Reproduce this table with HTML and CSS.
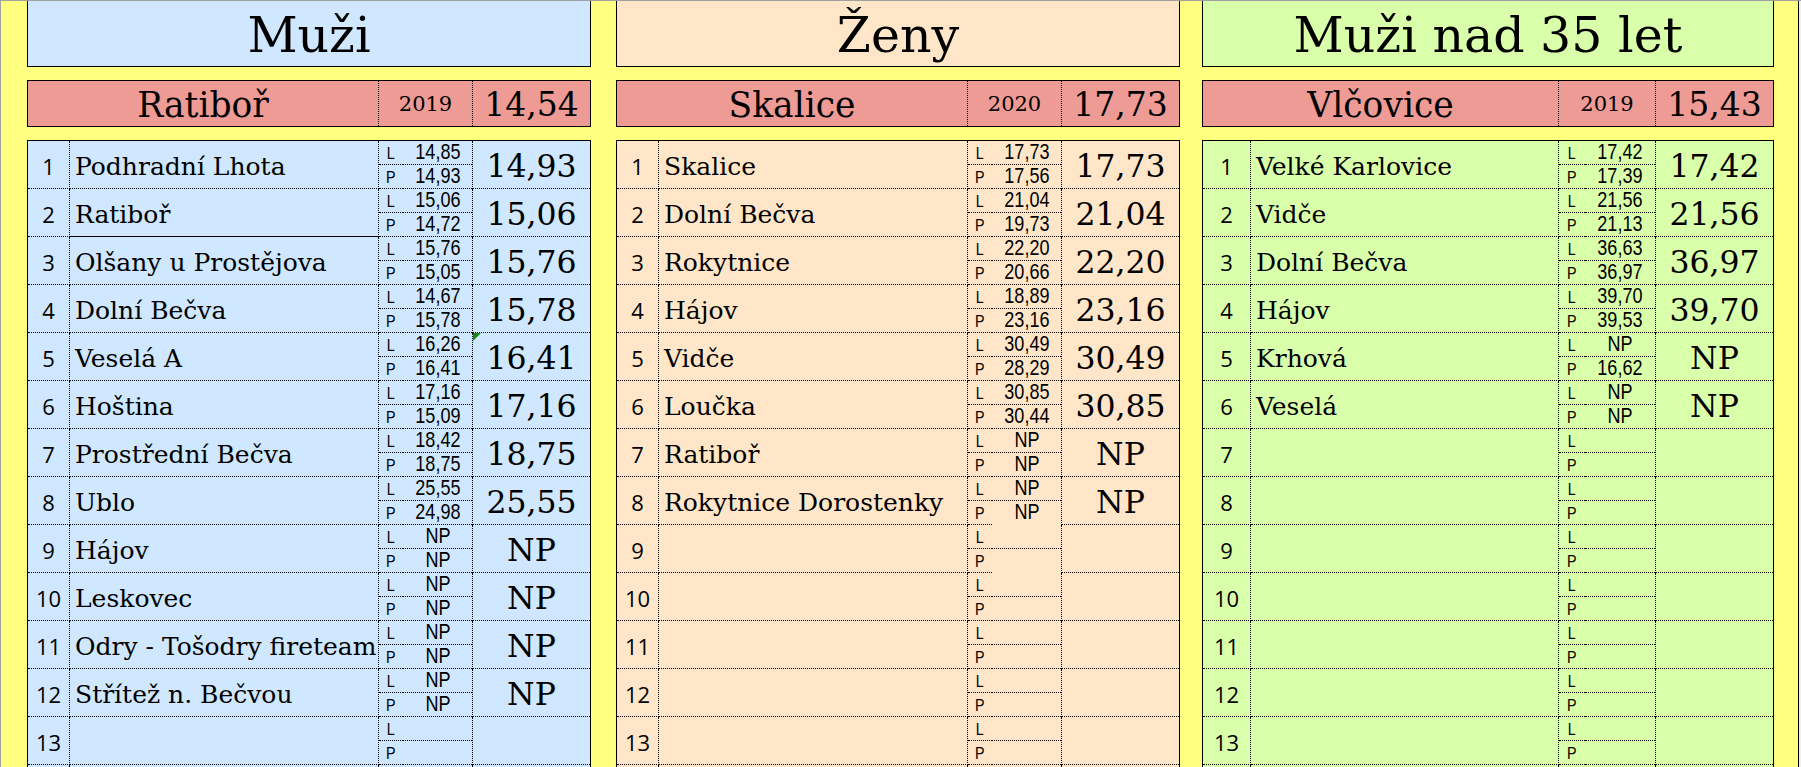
FILE: index.html
```html
<!DOCTYPE html>
<html lang="cs">
<head>
<meta charset="utf-8">
<title>Výsledky</title>
<link rel="stylesheet" href="styles.css">
</head>
<body>
<div class="sheet">
  <section class="panel men">
    <div class="title">Muži</div>
    <div class="record"><div class="rec-name">Ratiboř</div><div class="rec-year">2019</div><div class="rec-time">14,54</div></div>
    <div class="table">
      <div class="row"><div class="num">1</div><div class="name">Podhradní Lhota</div><div class="lp"><span class="ltr"><i>L</i></span><span class="val"><i>14,85</i></span><span class="ltr"><i>P</i></span><span class="val"><i>14,93</i></span></div><div class="res">14,93</div></div>
      <div class="row"><div class="num">2</div><div class="name solid-b">Ratiboř</div><div class="lp"><span class="ltr"><i>L</i></span><span class="val"><i>15,06</i></span><span class="ltr"><i>P</i></span><span class="val"><i>14,72</i></span></div><div class="res">15,06</div></div>
      <div class="row"><div class="num">3</div><div class="name">Olšany u Prostějova</div><div class="lp"><span class="ltr"><i>L</i></span><span class="val"><i>15,76</i></span><span class="ltr"><i>P</i></span><span class="val"><i>15,05</i></span></div><div class="res">15,76</div></div>
      <div class="row"><div class="num">4</div><div class="name">Dolní Bečva</div><div class="lp"><span class="ltr"><i>L</i></span><span class="val"><i>14,67</i></span><span class="ltr"><i>P</i></span><span class="val"><i>15,78</i></span></div><div class="res">15,78</div></div>
      <div class="row"><div class="num">5</div><div class="name">Veselá A</div><div class="lp"><span class="ltr"><i>L</i></span><span class="val"><i>16,26</i></span><span class="ltr"><i>P</i></span><span class="val"><i>16,41</i></span></div><div class="res flagged">16,41</div></div>
      <div class="row"><div class="num">6</div><div class="name">Hoština</div><div class="lp"><span class="ltr"><i>L</i></span><span class="val"><i>17,16</i></span><span class="ltr"><i>P</i></span><span class="val"><i>15,09</i></span></div><div class="res">17,16</div></div>
      <div class="row"><div class="num">7</div><div class="name">Prostřední Bečva</div><div class="lp"><span class="ltr"><i>L</i></span><span class="val"><i>18,42</i></span><span class="ltr"><i>P</i></span><span class="val"><i>18,75</i></span></div><div class="res">18,75</div></div>
      <div class="row"><div class="num">8</div><div class="name">Ublo</div><div class="lp"><span class="ltr"><i>L</i></span><span class="val"><i>25,55</i></span><span class="ltr"><i>P</i></span><span class="val"><i>24,98</i></span></div><div class="res">25,55</div></div>
      <div class="row"><div class="num">9</div><div class="name">Hájov</div><div class="lp"><span class="ltr"><i>L</i></span><span class="val"><i>NP</i></span><span class="ltr"><i>P</i></span><span class="val"><i>NP</i></span></div><div class="res">NP</div></div>
      <div class="row"><div class="num">10</div><div class="name">Leskovec</div><div class="lp"><span class="ltr"><i>L</i></span><span class="val"><i>NP</i></span><span class="ltr"><i>P</i></span><span class="val"><i>NP</i></span></div><div class="res">NP</div></div>
      <div class="row"><div class="num">11</div><div class="name">Odry - Tošodry fireteam</div><div class="lp"><span class="ltr"><i>L</i></span><span class="val"><i>NP</i></span><span class="ltr"><i>P</i></span><span class="val"><i>NP</i></span></div><div class="res">NP</div></div>
      <div class="row"><div class="num">12</div><div class="name">Střítež n. Bečvou</div><div class="lp"><span class="ltr"><i>L</i></span><span class="val"><i>NP</i></span><span class="ltr"><i>P</i></span><span class="val"><i>NP</i></span></div><div class="res">NP</div></div>
      <div class="row"><div class="num">13</div><div class="name"></div><div class="lp"><span class="ltr"><i>L</i></span><span class="val"></span><span class="ltr"><i>P</i></span><span class="val"></span></div><div class="res"></div></div>
      <div class="row"><div class="num"></div><div class="name"></div><div class="lp"><span class="ltr"></span><span class="val"></span><span class="ltr"></span><span class="val"></span></div><div class="res"></div></div>
    </div>
  </section>

  <section class="panel women">
    <div class="title">Ženy</div>
    <div class="record"><div class="rec-name">Skalice</div><div class="rec-year">2020</div><div class="rec-time">17,73</div></div>
    <div class="table">
      <div class="row"><div class="num">1</div><div class="name">Skalice</div><div class="lp"><span class="ltr"><i>L</i></span><span class="val"><i>17,73</i></span><span class="ltr"><i>P</i></span><span class="val"><i>17,56</i></span></div><div class="res">17,73</div></div>
      <div class="row"><div class="num">2</div><div class="name">Dolní Bečva</div><div class="lp"><span class="ltr"><i>L</i></span><span class="val"><i>21,04</i></span><span class="ltr"><i>P</i></span><span class="val"><i>19,73</i></span></div><div class="res">21,04</div></div>
      <div class="row"><div class="num">3</div><div class="name">Rokytnice</div><div class="lp"><span class="ltr"><i>L</i></span><span class="val"><i>22,20</i></span><span class="ltr"><i>P</i></span><span class="val"><i>20,66</i></span></div><div class="res">22,20</div></div>
      <div class="row"><div class="num">4</div><div class="name">Hájov</div><div class="lp"><span class="ltr"><i>L</i></span><span class="val"><i>18,89</i></span><span class="ltr"><i>P</i></span><span class="val"><i>23,16</i></span></div><div class="res">23,16</div></div>
      <div class="row"><div class="num">5</div><div class="name">Vidče</div><div class="lp"><span class="ltr"><i>L</i></span><span class="val"><i>30,49</i></span><span class="ltr"><i>P</i></span><span class="val"><i>28,29</i></span></div><div class="res">30,49</div></div>
      <div class="row"><div class="num">6</div><div class="name">Loučka</div><div class="lp"><span class="ltr"><i>L</i></span><span class="val"><i>30,85</i></span><span class="ltr"><i>P</i></span><span class="val"><i>30,44</i></span></div><div class="res">30,85</div></div>
      <div class="row"><div class="num">7</div><div class="name">Ratiboř</div><div class="lp"><span class="ltr"><i>L</i></span><span class="val"><i>NP</i></span><span class="ltr"><i>P</i></span><span class="val"><i>NP</i></span></div><div class="res">NP</div></div>
      <div class="row"><div class="num">8</div><div class="name">Rokytnice Dorostenky</div><div class="lp"><span class="ltr"><i>L</i></span><span class="val"><i>NP</i></span><span class="ltr"><i>P</i></span><span class="val open-b"><i>NP</i></span></div><div class="res">NP</div></div>
      <div class="row"><div class="num">9</div><div class="name"></div><div class="lp"><span class="ltr"><i>L</i></span><span class="val"></span><span class="ltr"><i>P</i></span><span class="val open-b"></span></div><div class="res"></div></div>
      <div class="row"><div class="num">10</div><div class="name"></div><div class="lp"><span class="ltr"><i>L</i></span><span class="val"></span><span class="ltr"><i>P</i></span><span class="val"></span></div><div class="res"></div></div>
      <div class="row"><div class="num">11</div><div class="name"></div><div class="lp"><span class="ltr"><i>L</i></span><span class="val"></span><span class="ltr"><i>P</i></span><span class="val"></span></div><div class="res"></div></div>
      <div class="row"><div class="num">12</div><div class="name"></div><div class="lp"><span class="ltr"><i>L</i></span><span class="val"></span><span class="ltr"><i>P</i></span><span class="val"></span></div><div class="res"></div></div>
      <div class="row"><div class="num">13</div><div class="name"></div><div class="lp"><span class="ltr"><i>L</i></span><span class="val"></span><span class="ltr"><i>P</i></span><span class="val"></span></div><div class="res"></div></div>
      <div class="row"><div class="num"></div><div class="name"></div><div class="lp"><span class="ltr"></span><span class="val"></span><span class="ltr"></span><span class="val"></span></div><div class="res"></div></div>
    </div>
  </section>

  <section class="panel senior">
    <div class="title">Muži nad 35 let</div>
    <div class="record"><div class="rec-name">Vlčovice</div><div class="rec-year">2019</div><div class="rec-time">15,43</div></div>
    <div class="table">
      <div class="row"><div class="num">1</div><div class="name">Velké Karlovice</div><div class="lp"><span class="ltr"><i>L</i></span><span class="val"><i>17,42</i></span><span class="ltr"><i>P</i></span><span class="val"><i>17,39</i></span></div><div class="res">17,42</div></div>
      <div class="row"><div class="num">2</div><div class="name">Vidče</div><div class="lp"><span class="ltr"><i>L</i></span><span class="val"><i>21,56</i></span><span class="ltr"><i>P</i></span><span class="val"><i>21,13</i></span></div><div class="res">21,56</div></div>
      <div class="row"><div class="num">3</div><div class="name">Dolní Bečva</div><div class="lp"><span class="ltr"><i>L</i></span><span class="val"><i>36,63</i></span><span class="ltr"><i>P</i></span><span class="val"><i>36,97</i></span></div><div class="res">36,97</div></div>
      <div class="row"><div class="num">4</div><div class="name">Hájov</div><div class="lp"><span class="ltr"><i>L</i></span><span class="val"><i>39,70</i></span><span class="ltr"><i>P</i></span><span class="val"><i>39,53</i></span></div><div class="res">39,70</div></div>
      <div class="row"><div class="num">5</div><div class="name">Krhová</div><div class="lp"><span class="ltr"><i>L</i></span><span class="val"><i>NP</i></span><span class="ltr"><i>P</i></span><span class="val"><i>16,62</i></span></div><div class="res">NP</div></div>
      <div class="row"><div class="num">6</div><div class="name">Veselá</div><div class="lp"><span class="ltr"><i>L</i></span><span class="val"><i>NP</i></span><span class="ltr"><i>P</i></span><span class="val"><i>NP</i></span></div><div class="res">NP</div></div>
      <div class="row"><div class="num">7</div><div class="name"></div><div class="lp"><span class="ltr"><i>L</i></span><span class="val"></span><span class="ltr"><i>P</i></span><span class="val"></span></div><div class="res"></div></div>
      <div class="row"><div class="num">8</div><div class="name"></div><div class="lp"><span class="ltr"><i>L</i></span><span class="val"></span><span class="ltr"><i>P</i></span><span class="val"></span></div><div class="res"></div></div>
      <div class="row"><div class="num">9</div><div class="name"></div><div class="lp"><span class="ltr"><i>L</i></span><span class="val"></span><span class="ltr"><i>P</i></span><span class="val"></span></div><div class="res"></div></div>
      <div class="row"><div class="num">10</div><div class="name"></div><div class="lp"><span class="ltr"><i>L</i></span><span class="val"></span><span class="ltr"><i>P</i></span><span class="val"></span></div><div class="res"></div></div>
      <div class="row"><div class="num">11</div><div class="name"></div><div class="lp"><span class="ltr"><i>L</i></span><span class="val"></span><span class="ltr"><i>P</i></span><span class="val"></span></div><div class="res"></div></div>
      <div class="row"><div class="num">12</div><div class="name"></div><div class="lp"><span class="ltr"><i>L</i></span><span class="val"></span><span class="ltr"><i>P</i></span><span class="val"></span></div><div class="res"></div></div>
      <div class="row"><div class="num">13</div><div class="name"></div><div class="lp"><span class="ltr"><i>L</i></span><span class="val"></span><span class="ltr"><i>P</i></span><span class="val"></span></div><div class="res"></div></div>
      <div class="row"><div class="num"></div><div class="name"></div><div class="lp"><span class="ltr"></span><span class="val"></span><span class="ltr"></span><span class="val"></span></div><div class="res"></div></div>
    </div>
  </section>

  <div class="right-margin"></div>
  <div class="sheet-edge"></div>
  <div class="beyond"></div>
</div>
<div class="sel-mark"></div>
</body>
</html>
```

FILE: styles.css
```css
* { box-sizing: border-box; }

html, body {
  margin: 0;
  padding: 0;
}

body {
  width: 1801px;
  height: 767px;
  overflow: hidden;
  position: relative;
  background: #ffff80;
  border-top: 1px solid #a0a0a0;
  border-left: 1px solid #a0a0a0;
  color: #000;
}

.sheet {
  display: flex;
  align-items: flex-start;
  padding-left: 26px;
  height: 766px;
}

.panel {
  flex: none;
  display: flex;
  flex-direction: column;
  width: 564px;
  --num: 42px;
  --name: 309px;
  --lp: 94px;
  --ltr: 24px;
}

.men { --bg: #cfe7ff; }
.women { margin-left: 25px; --bg: #ffe6c8; }
.senior {
  margin-left: 22px;
  width: 572px;
  --num: 48px;
  --name: 308px;
  --lp: 97px;
  --ltr: 26px;
  --bg: #d9ffaa;
}

.title {
  height: 66px;
  border: 1px solid #000;
  border-top: none;
  background: var(--bg);
  font-family: "DejaVu Serif", serif;
  font-size: 49px;
  line-height: 50px;
  text-align: center;
  padding-top: 10px;
  white-space: nowrap;
}

.record {
  margin-top: 13px;
  height: 47px;
  border: 1px solid #000;
  background: #ee9b95;
  display: grid;
  grid-template-columns: calc(var(--num) + var(--name)) var(--lp) 1fr;
  font-family: "DejaVu Serif", serif;
}

.record > div {
  display: flex;
  align-items: center;
  justify-content: center;
  white-space: nowrap;
}

.rec-name { font-size: 34.5px; border-right: 1px dotted #000; padding-top: 2px; }
.rec-year { font-size: 21px; border-right: 1px dotted #000; }
.rec-time { font-size: 33px; padding-top: 2px; }

.table {
  margin-top: 13px;
  border: 1px solid #000;
  border-bottom: none;
  background: var(--bg);
}

.row {
  display: grid;
  grid-template-columns: var(--num) var(--name) var(--lp) 1fr;
  height: 48px;
}

.num, .name, .res {
  border-bottom: 1px dotted #000;
  display: flex;
  align-items: center;
  white-space: nowrap;
}

.num, .name, .lp { border-right: 1px dotted #000; }

.num {
  justify-content: center;
  font-family: "Open Sans", "Liberation Sans", sans-serif;
  font-size: 22px;
  padding-top: 2px;
}

.name {
  font-family: "DejaVu Serif", serif;
  font-size: 25px;
  padding-left: 5px;
  padding-top: 3px;
}

.name.solid-b { border-bottom-style: solid; }

.res {
  justify-content: center;
  font-family: "DejaVu Serif", serif;
  font-size: 31.5px;
  padding-top: 3px;
  position: relative;
}

.res.flagged::before {
  content: "";
  position: absolute;
  left: 0;
  top: 0;
  border-top: 8px solid #138a13;
  border-right: 8px solid transparent;
}

.lp {
  display: grid;
  grid-template-columns: var(--ltr) 1fr;
  grid-template-rows: 24px 24px;
}

.lp span {
  border-bottom: 1px dotted #000;
  display: flex;
  align-items: center;
  justify-content: center;
  font-family: "Liberation Sans", Arial, sans-serif;
  line-height: 1;
  padding-top: 1px;
  white-space: nowrap;
}

.lp i {
  font-style: normal;
  display: inline-block;
  transform: scaleX(0.84);
}

.lp .ltr { font-size: 17px; }
.lp .val { font-size: 21.5px; }
.lp .val.open-b { border-bottom-color: transparent; }

.right-margin { flex: none; width: 24px; }
.sheet-edge { flex: none; width: 1px; height: 766px; background: #000; }
.beyond { flex: none; width: 2px; height: 766px; background: #f0f0f0; }

.sel-mark {
  position: absolute;
  top: -1px;
  left: 1202px;
  width: 49px;
  height: 1px;
  background: #217346;
}
```
